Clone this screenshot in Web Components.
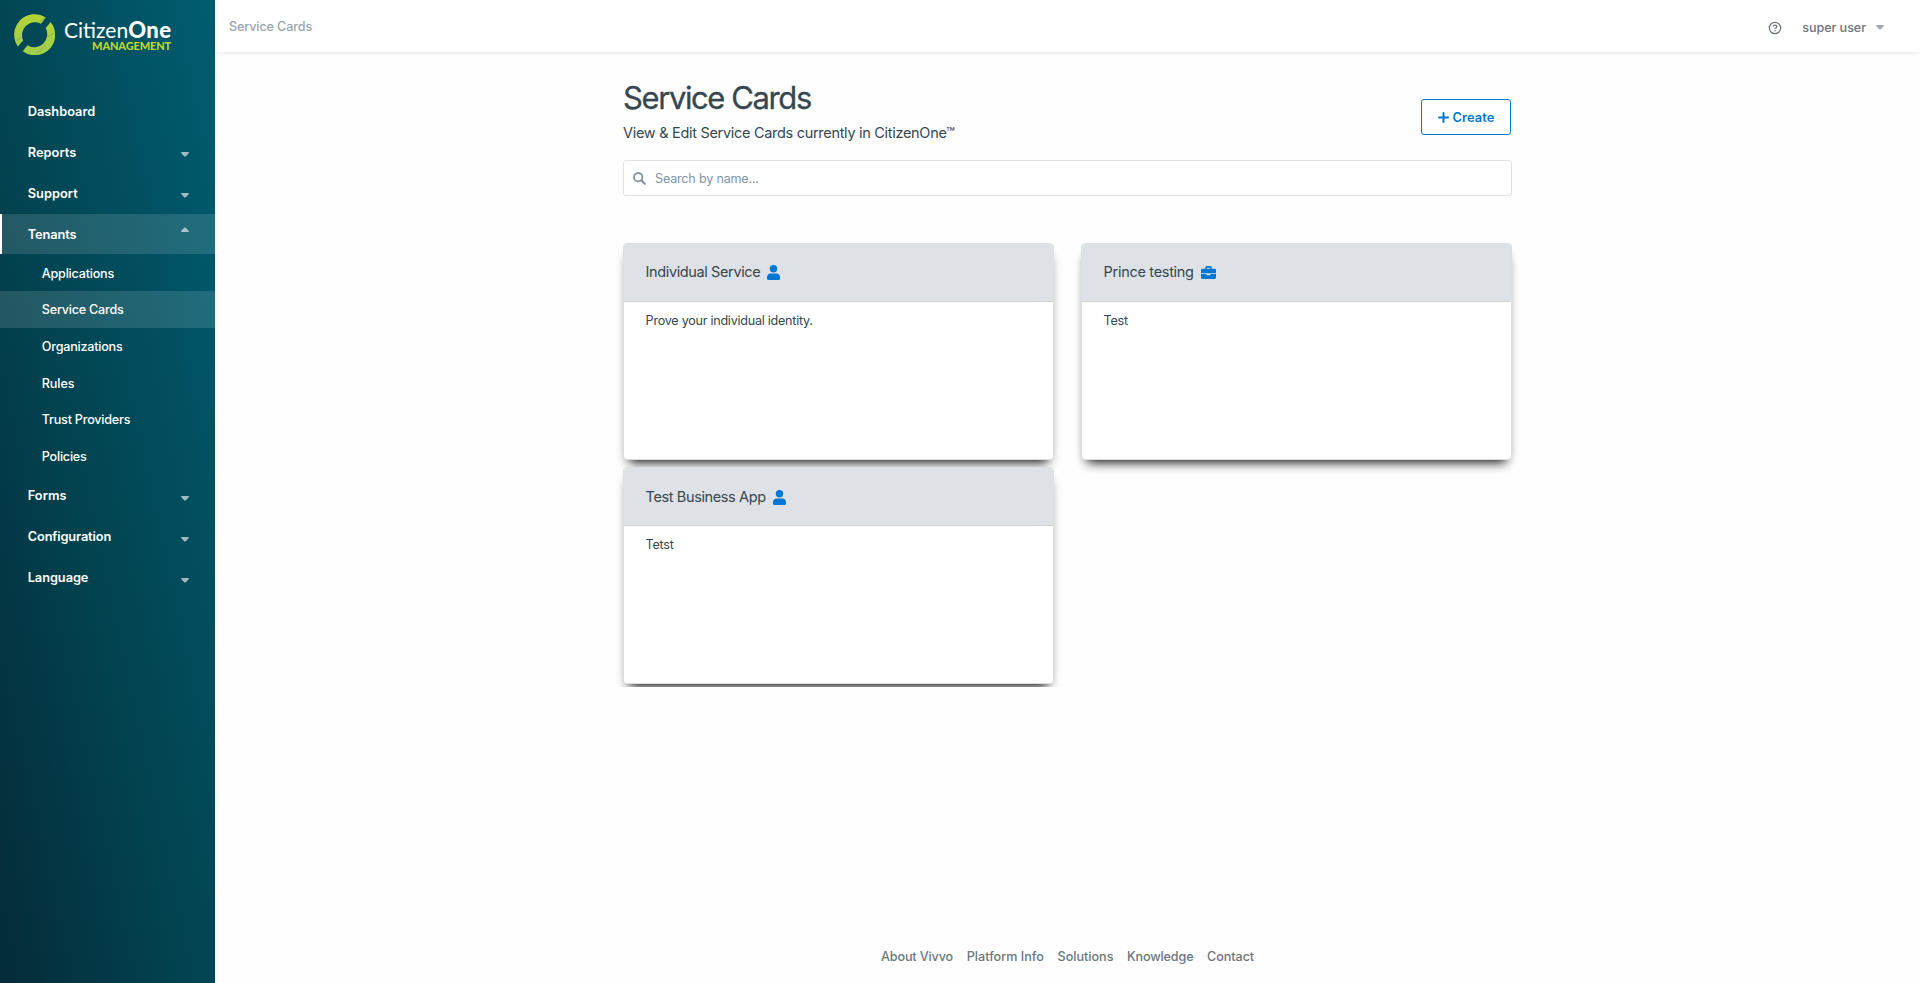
<!DOCTYPE html>
<html lang="en">
<head>
<meta charset="utf-8">
<title>Service Cards</title>
<style>
html,body{margin:0;height:100%}
body{background:#fefefe;font:400 12.6px/20px Inter,"Liberation Sans",sans-serif;color:#36474f;overflow:hidden}
</style>
</head>
<body>
<c1-app></c1-app>
<script>
const define = (name, html) => customElements.define(name, class extends HTMLElement {
  constructor() {
    super();
    this.attachShadow({ mode: 'open' }).innerHTML = html;
  }
});

define('c1-logo', `
<style>
:host{display:flex;height:70px;color:#fff;font-family:Lato,sans-serif;padding-left:14px;box-sizing:border-box}
svg{display:block;margin-top:14px;flex:none}
.words{display:flex;flex-direction:column;align-items:flex-end;width:107px;margin:19px 0 0 9px}
.name{font-size:21px;line-height:22px;white-space:nowrap;height:22px}
b{font-weight:900;font-size:22px;letter-spacing:.45px;line-height:1;margin-right:-.45px}
.sub{font-size:11px;line-height:10px;font-weight:900;letter-spacing:-.15px;color:#bdd62f}
</style>
<svg width="41" height="41" viewBox="0 0 41 41">
<defs><linearGradient id="g" x1="0" y1="0" x2="0" y2="1"><stop offset="0" stop-color="#b4d334"/><stop offset="1" stop-color="#9fce4e"/></linearGradient></defs>
<path fill="url(#g)" d="M3.9 32.4 A20.4 20.4 0 0 1 31.8 3.6 L27 9.7 A13 13 0 0 0 9.1 26.5 Z"/>
<path fill="url(#g)" d="M36.7 8.1 A20.4 20.4 0 0 1 8.7 37.3 L13.4 31.3 A13 13 0 0 0 31.7 14.1 Z"/>
<path d="M23 9.5 L31 3.8 M1.500 27 L7.500 23.500 M33.500 23 L40.500 19 M21.500 40 L32 31.500" stroke="#6f9c3c" stroke-width=".5" fill="none"/>
</svg>
<div class="words"><div class="name">Citizen<b>One</b></div><div class="sub">MANAGEMENT</div></div>
`);

define('c1-caret', `
<style>:host{display:block;width:8px;height:5px}svg{display:block}</style>
<svg width="8" height="5" viewBox="0 0 8 5"><path fill="currentColor" d="M.5 0 H7.500 Q8.200 .2 7.800 .9 L4.900 4.200 Q4 5 3.100 4.200 L.2 .9 Q-.2 .2 .5 0Z"/></svg>
`);

define('c1-nav-item', `
<style>
:host{display:flex;align-items:center;justify-content:space-between;height:40px;margin-bottom:1px;padding:1px 26px 0 25.700px;border-left:2px solid transparent;box-sizing:border-box;font-weight:600;font-size:12.8px;color:#fff}
:host([open]){background:rgba(255,255,255,.13) padding-box;border-left-color:#fff;margin-bottom:0}
c1-caret{display:none;color:rgba(255,255,255,.62);margin-top:4px}
:host([menu]) c1-caret{display:block}
:host([open]) c1-caret{transform:scaleY(-1);margin-top:-10px}
</style>
<span><slot></slot></span><c1-caret></c1-caret>
`);

define('c1-sub-item', `
<style>
:host{display:flex;align-items:center;height:36.67px;padding:2px 0 0 41.800px;box-sizing:border-box;font-weight:500;letter-spacing:-.22px;color:#fff}
:host([active]){background:rgba(255,255,255,.13)}
</style>
<slot></slot>
`);

define('c1-sidebar', `
<style>
:host{display:flex;flex-direction:column;width:215px;flex:none;height:100%;background:linear-gradient(to top right,#042b38,#03414e 40%,#005d71)}
nav{margin-top:21px}
.sub{height:221.500px;padding-top:.5px;box-sizing:border-box}
</style>
<c1-logo></c1-logo>
<nav>
<c1-nav-item>Dashboard</c1-nav-item>
<c1-nav-item menu style="letter-spacing:.05px">Reports</c1-nav-item>
<c1-nav-item menu style="letter-spacing:.05px">Support</c1-nav-item>
<c1-nav-item menu open style="letter-spacing:-.1px">Tenants</c1-nav-item>
<div class="sub">
<c1-sub-item>Applications</c1-sub-item>
<c1-sub-item active>Service Cards</c1-sub-item>
<c1-sub-item>Organizations</c1-sub-item>
<c1-sub-item style="letter-spacing:-.1px">Rules</c1-sub-item>
<c1-sub-item>Trust Providers</c1-sub-item>
<c1-sub-item>Policies</c1-sub-item>
</div>
<c1-nav-item menu style="letter-spacing:.05px">Forms</c1-nav-item>
<c1-nav-item menu style="letter-spacing:-.13px">Configuration</c1-nav-item>
<c1-nav-item menu style="letter-spacing:-.06px">Language</c1-nav-item>
</nav>
`);

define('c1-header', `
<style>
:host{display:flex;align-items:center;height:52px;flex:none;box-sizing:border-box;padding:3px 36px 0 14px;background:#fff;box-shadow:0 1px 4px rgba(0,0,0,.1);font-weight:500;color:#6c757d}
.crumb{flex:1;color:#98a4b0;letter-spacing:-.12px;margin-top:-2px}
svg{display:block;margin-right:20.500px}
c1-caret{margin-left:10px;color:#a4abb1}
.user{letter-spacing:-.06px}
</style>
<span class="crumb">Service Cards</span>
<svg width="14" height="14" viewBox="0 0 14 14" fill="none" stroke="#6c757d"><circle cx="7" cy="7" r="5.700" stroke-width="1.200"/><path d="M5.200 5.600 Q5.300 4.100 7 4.100 Q8.800 4.100 8.800 5.600 Q8.800 6.500 7.700 7 Q7 7.300 7 8.100" stroke-width="1.300"/><circle cx="7" cy="9.700" r=".8" fill="#6c757d" stroke="none"/></svg>
<span class="user">super user</span><c1-caret></c1-caret>
`);

define('c1-button', `
<style>
:host{display:flex;align-items:center;justify-content:center;width:90px;height:36px;box-sizing:border-box;padding-top:1px;border:1px solid #0077d3;border-radius:3px;background:#fff;color:#0077d3;font-weight:600;font-size:12.8px;letter-spacing:.1px}
svg{margin:-1px 4px 0 0}
</style>
<svg width="11" height="11" viewBox="0 0 11 11"><path d="M5.500 1V10M1 5.500H10" stroke="currentColor" stroke-width="2" stroke-linecap="round"/></svg><slot></slot>
`);

define('c1-search', `
<style>
:host{display:flex;align-items:center;height:36px;box-sizing:border-box;border:1px solid #dee2e6;border-radius:3px;background:#fff;padding:1px 0 0 9px;color:#8493a3;letter-spacing:-.2px}
svg{margin:-1px 9px 0 0}
</style>
<svg width="13" height="13" viewBox="0 0 13 13" fill="none" stroke="currentColor"><circle cx="5.200" cy="5.200" r="4.200" stroke-width="1.900"/><path d="M8.500 8.500L11.800 11.800" stroke-width="2.200" stroke-linecap="round"/></svg>
<slot></slot>
`);

define('c1-user-icon', `
<style>:host{display:block}svg{display:block}</style>
<svg width="13" height="15" viewBox="0 0 13 15" fill="#0077d3"><circle cx="6.500" cy="3.700" r="3.700"/><path d="M3.900 8.600H9.100A3.900 3.900 0 0 1 13 12.500V13.600Q13 15 11.800 15H1.200Q0 15 0 13.600V12.500A3.900 3.900 0 0 1 3.900 8.600Z"/></svg>
`);

define('c1-briefcase-icon', `
<style>:host{display:block}svg{display:block}</style>
<svg width="15" height="13" viewBox="0 0 15 13" fill="#0077d3"><path d="M5 3V1.700Q5 .9 5.800 .9H9.200Q10 .9 10 1.700V3" fill="none" stroke="#0077d3" stroke-width="1.600"/><path d="M1.400 2.700H13.600Q15 2.700 15 4.100V7.200H0V4.100Q0 2.700 1.400 2.700Z"/><path d="M0 8H5.500V8.700Q5.500 9.300 6.100 9.300H8.900Q9.500 9.300 9.500 8.700V8H15V11.600Q15 13 13.600 13H1.400Q0 13 0 11.600Z"/></svg>
`);

define('c1-card', `
<style>
:host{display:flex;flex-direction:column;height:217px;box-sizing:border-box;border:1px solid #dcdfe2;border-radius:4px;background:#fff;box-shadow:0 8px 11px -6px #000;overflow:hidden}
header{display:flex;align-items:center;height:58px;box-sizing:border-box;flex:none;padding:0 21.600px;background:#dee1e6;border-bottom:1px solid #d0d4d9;font-size:14.500px;letter-spacing:-.38px;gap:7.200px}
:host([raised]) header{padding-bottom:2px}
header ::slotted([slot=icon]){margin-top:1px}
.body{padding:9px 21.600px;letter-spacing:-.26px}
</style>
<header><slot name="title"></slot><slot name="icon"></slot></header>
<div class="body"><slot></slot></div>
`);

define('c1-footer', `
<style>
:host{display:flex;justify-content:center;gap:13.700px;font-weight:500;color:#6c757d;padding-bottom:16px}
</style>
<span style="letter-spacing:-.12px">About Vivvo</span><span>Platform Info</span><span>Solutions</span><span style="letter-spacing:-.15px">Knowledge</span><span style="letter-spacing:-.07px">Contact</span>
`);

define('c1-page', `
<style>
:host{display:flex;flex-direction:column;flex:1;width:889px;margin:0 auto}
.head{display:flex;justify-content:space-between;height:108px;box-sizing:border-box;padding:27px 1px 0 0}
h1{margin:0;font-weight:400;font-size:31px;line-height:38px;letter-spacing:-1.400px;-webkit-text-stroke:.3px}
p{margin:5px 0 0;font-size:14.500px;line-height:22px;letter-spacing:-.3px}
c1-button{margin-top:20px}
.grid{display:grid;grid-template-columns:1fr 1fr;gap:7px 27px;margin:41px -8px 0;padding:6px 8px 3px;overflow:hidden}
c1-footer{margin-top:auto}
</style>
<div class="head"><div><h1>Service Cards</h1><p>View &amp; Edit Service Cards currently in CitizenOne™</p></div><c1-button>Create</c1-button></div>
<c1-search>Search by name...</c1-search>
<div class="grid">
<c1-card raised><span slot="title">Individual Service</span><c1-user-icon slot="icon"></c1-user-icon>Prove your individual identity.</c1-card>
<c1-card raised><span slot="title" style="letter-spacing:-.3px">Prince testing</span><c1-briefcase-icon slot="icon"></c1-briefcase-icon>Test</c1-card>
<c1-card><span slot="title">Test Business App</span><c1-user-icon slot="icon"></c1-user-icon>Tetst</c1-card>
</div>
<c1-footer></c1-footer>
`);

define('c1-app', `
<style>
:host{display:flex;height:100vh}
main{flex:1;display:flex;flex-direction:column}
</style>
<c1-sidebar></c1-sidebar>
<main><c1-header></c1-header><c1-page></c1-page></main>
`);
</script>
</body>
</html>
